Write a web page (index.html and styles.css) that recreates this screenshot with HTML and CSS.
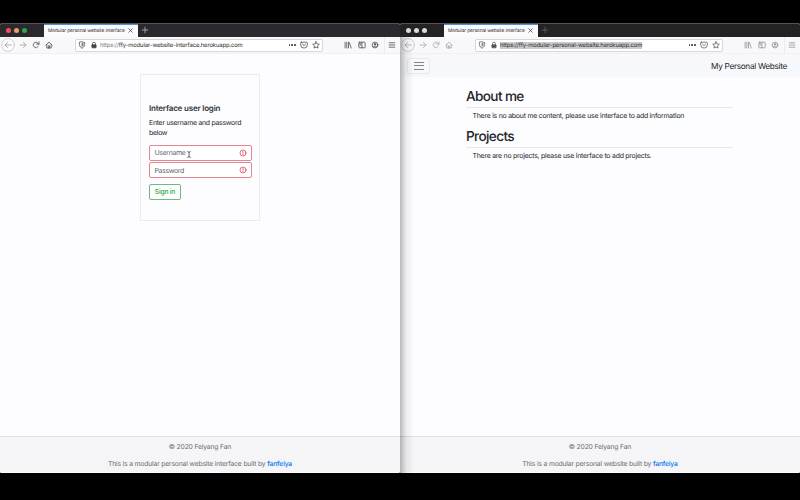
FILE: index.html
```html
<!DOCTYPE html>
<html lang="en">
<head>
<meta charset="utf-8">
<title>Modular personal website</title>
<link rel="stylesheet" href="styles.css">
</head>
<body>
<svg class="defs" aria-hidden="true">
  <symbol id="back" viewBox="0 0 14 14"><circle cx="7" cy="7" r="6.4" fill="#fbfafc" stroke="#bbb" stroke-width=".7"/><path d="M10.2 7H4M6.6 4.4 4 7l2.6 2.6"/></symbol>
  <symbol id="forward" viewBox="0 0 8 8"><path d="M1 4h6M4.4 1.4 7 4 4.4 6.6"/></symbol>
  <symbol id="reload" viewBox="0 0 8 8"><path d="M6.3 5.3A2.7 2.7 0 1 1 6 2.2L6.8 3M7 .8V3.2H4.6"/></symbol>
  <symbol id="home" viewBox="0 0 8 8"><path d="M.8 4.2 4 1.1l3.2 3.1M1.8 3.6V7h4.4V3.6M3.4 7V4.8h1.2V7"/></symbol>
  <symbol id="shield" viewBox="0 0 8 8"><path d="M4 .8 6.7 1.6C6.8 4.4 6.1 6.3 4 7.3 1.9 6.3 1.2 4.4 1.3 1.6ZM4 2.6V5.4C4.8 4.8 5.1 4 5.1 2.9Z"/></symbol>
  <symbol id="lock" viewBox="0 0 8 8"><path d="M2.5 4V2.7a1.5 1.5 0 0 1 3 0V4"/><rect x="1.9" y="3.8" width="4.2" height="3" rx=".4" fill="currentColor"/></symbol>
  <symbol id="pocket" viewBox="0 0 8 8"><path d="M1.3 1.2h5.4q.6 0 .6.6v2a3.3 3.3 0 0 1-6.6 0v-2q0-.6.6-.6ZM2.5 3.3 4 4.7l1.5-1.4"/></symbol>
  <symbol id="star" viewBox="0 0 8 8"><path d="m4 .8 1 2.1 2.3.3-1.7 1.6.4 2.3L4 6 2 7.1l.4-2.3L.7 3.2 3 2.9Z"/></symbol>
  <symbol id="library" viewBox="0 0 8 8"><path d="M1.1 1.2v5.8M2.8 1.2v5.8M4.5 1.2v5.8M5.3 1.5 7.2 7"/></symbol>
  <symbol id="sidebar" viewBox="0 0 8 8"><rect x=".8" y="1.2" width="6.4" height="5.6" rx=".8"/><path d="M3.9 1.2v5.6M1.8 2.7h1.1M1.8 4h1.1"/></symbol>
  <symbol id="account" viewBox="0 0 8 8"><circle cx="4" cy="4" r="2.9"/><circle cx="4" cy="3.3" r=".8" fill="currentColor"/><path d="M2.5 5.6q1.5-1.2 3 0"/></symbol>
  <symbol id="menu" viewBox="0 0 8 8"><path d="M1.2 1.8h5.6M1.2 4h5.6M1.2 6.2h5.6"/></symbol>
  <symbol id="close" viewBox="0 0 8 8"><path d="m2 2 4 4M6 2 2 6"/></symbol>
  <symbol id="plus" viewBox="0 0 8 8"><path d="M4 1.2v5.6M1.2 4h5.6"/></symbol>
  <symbol id="alert" viewBox="0 0 8 8"><circle cx="4" cy="4" r="3"/><path d="M4 2.3v2M4 5.3v.3"/></symbol>
</svg>
<main class="desktop">
  <section class="window">
    <header class="titlebar">
      <div class="lights"><i class="red"></i><i class="amber"></i><i class="green"></i></div>
      <div class="tab"><span>Modular personal website interface</span><svg><use href="#close"/></svg></div>
      <svg class="new"><use href="#plus"/></svg>
    </header>
    <nav class="toolbar">
      <div class="nav"><svg class="back"><use href="#back"/></svg><svg class="dim"><use href="#forward"/></svg><svg><use href="#reload"/></svg><svg><use href="#home"/></svg></div>
      <div class="address"><svg><use href="#shield"/></svg><svg class="lock"><use href="#lock"/></svg><span class="url"><em>https://</em>ffy-modular-website-interface.herokuapp.com</span><b class="dots"><i></i><i></i><i></i></b><svg><use href="#pocket"/></svg><svg><use href="#star"/></svg></div>
      <div class="tools"><svg><use href="#library"/></svg><svg><use href="#sidebar"/></svg><svg><use href="#account"/></svg></div>
      <div class="more"><svg><use href="#menu"/></svg></div>
    </nav>
    <div class="page">
      <form class="card">
        <h1>Interface user login</h1>
        <p>Enter username and password below</p>
        <div class="field"><span>Username</span><svg><use href="#alert"/></svg>
          <svg class="cursor" viewBox="0 0 4 7"><path d="M.7.6Q2 .6 2 1.4V5.6Q2 6.4.7 6.4M3.3.6Q2 .6 2 1.4M2 5.6Q2 6.4 3.3 6.4"/></svg></div>
        <div class="field"><span>Password</span><svg><use href="#alert"/></svg></div>
        <button type="button">Sign in</button>
      </form>
    </div>
    <footer><p class="copy">© 2020 Feiyang Fan</p><p class="built">This is a modular personal website interface built by <a>fanfeiya</a></p></footer>
  </section>
  <section class="window inactive">
    <header class="titlebar">
      <div class="lights"><i></i><i></i><i></i></div>
      <div class="tab"><span>Modular personal website interface</span><svg><use href="#close"/></svg></div>
      <svg class="new"><use href="#plus"/></svg>
    </header>
    <nav class="toolbar">
      <div class="nav"><svg class="back"><use href="#back"/></svg><svg><use href="#forward"/></svg><svg><use href="#reload"/></svg><svg><use href="#home"/></svg></div>
      <div class="address"><svg><use href="#shield"/></svg><svg class="lock"><use href="#lock"/></svg><span class="url"><mark>https://ffy-modular-personal-website.herokuapp.com</mark></span><b class="dots"><i></i><i></i><i></i></b><svg><use href="#pocket"/></svg><svg><use href="#star"/></svg></div>
      <div class="tools"><svg><use href="#library"/></svg><svg><use href="#sidebar"/></svg><svg><use href="#account"/></svg></div>
      <div class="more"><svg><use href="#menu"/></svg></div>
    </nav>
    <div class="sitebar"><div class="toggle"><i></i><i></i><i></i></div><span class="brand">My Personal Website</span></div>
    <div class="page site">
      <h2>About me</h2>
      <p>There is no about me content, please use interface to add information</p>
      <h2>Projects</h2>
      <p>There are no projects, please use interface to add projects.</p>
    </div>
    <footer><p class="copy">© 2020 Feiyang Fan</p><p class="built">This is a modular personal website built by <a>fanfeiya</a></p></footer>
  </section>
</main>
</body>
</html>
```
FILE: styles.css
```css
* { box-sizing: border-box; }
body { margin: 0; background: #000; font-family: Inter, "Liberation Sans", sans-serif; color: #212529; text-rendering: geometricPrecision; }
h1, h2, p { margin: 0; }
.defs { position: absolute; width: 0; height: 0; }
svg { display: block; flex: none; width: 8px; height: 8px; fill: none; stroke: currentColor; stroke-width: .75; stroke-linecap: round; stroke-linejoin: round; }
.desktop { display: grid; grid-template-columns: 400px 400px; height: 500px; padding: 23px 0 27px; }
.window { position: relative; display: flex; flex-direction: column; overflow: hidden; background: #fdfcfe; border-top: 1px solid #555458; border-radius: 2px; white-space: nowrap; }
.titlebar { display: flex; align-items: center; height: 13px; background: #2b292d; }
.lights { display: flex; gap: 3.3px; width: 44px; padding-left: 5.7px; }
.lights i { width: 5px; height: 5px; border-radius: 50%; background: #dad9dc; }
.lights .red { background: #f0505a; }
.lights .amber { background: #dfa367; }
.lights .green { background: #29a84b; }
.tab { display: flex; align-items: center; justify-content: space-between; width: 94px; height: 13px; padding: 0 4px; background: #fbfafc; border-top: 1px solid #4a91df; font-size: 4.8px; letter-spacing: -.1px; color: #222; }
.tab svg { width: 7px; height: 7px; margin-top: -1px; }
.new { margin: -1px 0 0 2.5px; color: #c5c3c8; }
.toolbar { display: flex; align-items: center; height: 17px; background: #f8f7f9; color: #444; border-bottom: 1px solid #f0eff2; }
.nav { display: flex; align-items: center; gap: 5.1px; width: 75px; padding-left: 1px; }
.nav .back { width: 14px; height: 14px; color: #99989b; margin-right: -1.5px; }
.nav .dim { color: #99989b; }
.address { display: flex; align-items: center; width: 248px; height: 13px; padding: 0 2px; background: #fff; border: 1px solid #d6d5d8; border-radius: 2px; }
.address > svg:last-child { margin-right: .5px; }
.lock { margin-left: 4px; }
.url { flex: 1; margin-left: 2px; padding-top: 1px; font-size: 5.9px; letter-spacing: -.13px; color: #29292b; }
.url em { font-style: normal; color: #77767a; }
mark { background: #cbcacd; color: #29292b; }
.dots { display: flex; gap: 1.2px; margin-right: 4.5px; }
.dots i { width: 1.5px; height: 1.5px; border-radius: 50%; background: #444; }
.dots + svg { margin-right: 3.5px; }
.tools { display: flex; gap: 5.5px; width: 61px; padding-left: 21px; }
.more { display: flex; align-items: center; height: 16px; padding-left: 3px; border-left: 1px solid #ececef; }
.page { flex: 1; }
.card { width: 120px; height: 147px; margin: 20px 0 0 140px; padding: 27px 8px 0; border: 1px solid #ebeaed; border-radius: 1px; }
h1 { font-size: 8px; line-height: 12px; font-weight: 600; letter-spacing: -.19px; color: #303438; }
.card p { font-size: 6.9px; line-height: 10px; letter-spacing: -.26px; margin: 3.5px 0 7px; white-space: normal; }
.field { position: relative; display: flex; align-items: center; justify-content: space-between; width: 103px; height: 16px; margin-bottom: 1.5px; padding: 0 4px 0 4.5px; border: 1px solid #e68492; border-radius: 2px; background: #fff; font-size: 7px; letter-spacing: -.38px; color: #656b71; }
.field svg { color: #dc4055; }
.field .cursor { position: absolute; left: 37px; top: 5px; width: 4px; height: 7px; color: #333; }
button { display: block; width: 32px; height: 16px; margin-top: 6px; padding: 0; border: 1px solid #6eba80; border-radius: 2px; background: #fff; color: #28a745; font: 500 6.7px Inter, sans-serif; letter-spacing: -.18px; }
footer { height: 37px; padding-top: 3px; border-top: 1px solid #dfdee1; border-bottom: 1px solid #fff; background: #f5f4f7; text-align: center; font-size: 6.8px; letter-spacing: -.18px; color: #6b6d70; }
footer p { line-height: 13px; }
footer .built { margin-top: 3.5px; }
footer a { color: #0878ef; font-weight: 500; }
.inactive .toolbar { color: #8d8c90; }
.inactive .nav svg { color: #a5a4a7; }
.inactive .address > svg { color: #555; }
.inactive .titlebar { background: #242225; }
.inactive .new { color: #68666a; }
.inactive::after { content: ""; position: absolute; left: 0; top: 13px; width: 14px; bottom: 0; background: linear-gradient(90deg, #0004, #0001 45%, #0000); }
.sitebar { display: flex; align-items: center; justify-content: space-between; height: 23px; padding: 0 13px 0 7px; background: #f6f8fb; }
.toggle { display: flex; flex-direction: column; align-items: center; justify-content: center; gap: 2.5px; width: 23px; height: 16px; border: 1px solid #e9e9ec; border-radius: 2px; }
.toggle i { width: 10px; height: 1px; background: #838386; }
.brand { font-size: 8.2px; letter-spacing: -.29px; }
.site { padding: 10px 67px 0 66px; }
h2 { height: 20.5px; border-bottom: 1px solid #e7e6e9; font-size: 13.6px; line-height: 20px; font-weight: 500; letter-spacing: -.63px; }
.site p { height: 19.5px; padding-left: 6.5px; font-size: 6.9px; line-height: 15.5px; letter-spacing: -.22px; }
```
